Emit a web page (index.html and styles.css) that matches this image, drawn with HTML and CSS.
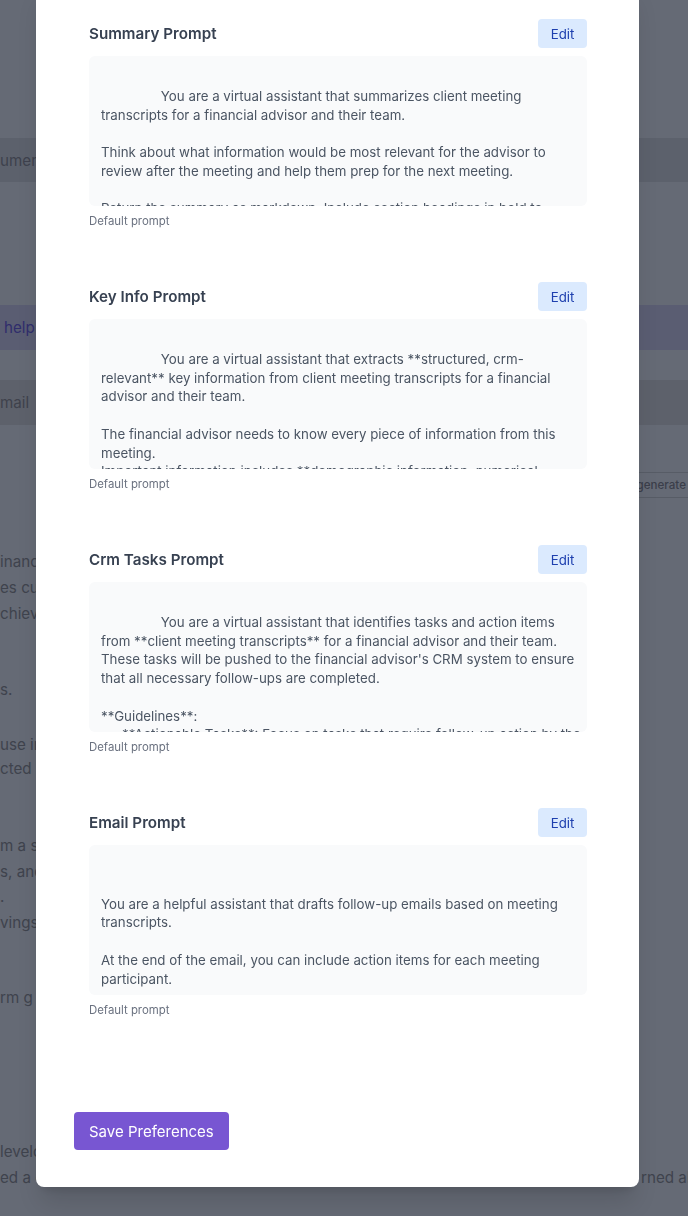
FILE: index.html
```html
<!DOCTYPE html>
<html lang="en">
<head>
<meta charset="utf-8">
<title>Preferences</title>
<link rel="stylesheet" href="styles.css">
</head>
<body>
<div class="page">
  <div class="band band-doc"><span class="band-label">umer</span></div>
  <div class="band band-help"><span class="band-label help-label">help</span></div>
  <div class="band band-mail"><span class="band-label mail-label">mail</span></div>
  <div class="regen-row"><span class="regen">Regenerate</span></div>
  <div class="para p1">
    <div class="frag">inanc</div>
    <div class="frag">es cu</div>
    <div class="frag">chieve</div>
  </div>
  <div class="para p2"><div class="frag">s.</div></div>
  <div class="para p3">
    <div class="frag">use in</div>
    <div class="frag">cted</div>
  </div>
  <div class="para p4">
    <div class="frag">m a si</div>
    <div class="frag">s, and</div>
    <div class="frag">.</div>
    <div class="frag">vings</div>
  </div>
  <div class="para p5"><div class="frag">rm g</div></div>
  <div class="para p6">
    <div class="frag">levelo</div>
    <div class="split"><span class="frag">ed a c</span><span class="tail">rned ab</span></div>
  </div>
</div>

<div class="overlay">
  <div class="modal">
    <div class="prompts">
      <section class="prompt">
        <div class="prompt-head">
          <h3 class="prompt-title">Summary Prompt</h3>
          <button class="edit-btn">Edit</button>
        </div>
        <div class="prompt-text">
                You are a virtual assistant that summarizes client meeting
transcripts for a financial advisor and their team.

Think about what information would be most relevant for the advisor to
review after the meeting and help them prep for the next meeting.

Return the summary as markdown. Include section headings in bold to</div>
        <p class="prompt-note">Default prompt</p>
      </section>

      <section class="prompt">
        <div class="prompt-head">
          <h3 class="prompt-title">Key Info Prompt</h3>
          <button class="edit-btn">Edit</button>
        </div>
        <div class="prompt-text">
                You are a virtual assistant that extracts **structured, crm-
relevant** key information from client meeting transcripts for a financial
advisor and their team.

The financial advisor needs to know every piece of information from this
meeting.
Important information includes **demographic information, numerical</div>
        <p class="prompt-note">Default prompt</p>
      </section>

      <section class="prompt">
        <div class="prompt-head">
          <h3 class="prompt-title">Crm Tasks Prompt</h3>
          <button class="edit-btn">Edit</button>
        </div>
        <div class="prompt-text">
                You are a virtual assistant that identifies tasks and action items
from **client meeting transcripts** for a financial advisor and their team.
These tasks will be pushed to the financial advisor's CRM system to ensure
that all necessary follow-ups are completed.

**Guidelines**:
   - **Actionable Tasks**: Focus on tasks that require follow-up action by the</div>
        <p class="prompt-note">Default prompt</p>
      </section>

      <section class="prompt">
        <div class="prompt-head">
          <h3 class="prompt-title">Email Prompt</h3>
          <button class="edit-btn">Edit</button>
        </div>
        <div class="prompt-text">

You are a helpful assistant that drafts follow-up emails based on meeting
transcripts.

At the end of the email, you can include action items for each meeting
participant.</div>
        <p class="prompt-note">Default prompt</p>
      </section>
    </div>
    <button class="save-btn">Save Preferences</button>
  </div>
</div>
</body>
</html>
```

FILE: styles.css
```css
* { box-sizing: border-box; }

html, body {
  margin: 0;
  padding: 0;
  height: 100%;
  overflow: hidden;
}

body {
  font-family: Inter, "Noto Sans", "Liberation Sans", sans-serif;
  background: #656a75;
  color: #3d414c;
}

/* underlying page (dimmed behind the dialog) */
.page {
  display: flex;
  flex-direction: column;
  font-size: 15.2px;
}

.band {
  display: flex;
  align-items: center;
  white-space: nowrap;
}

.band-doc {
  margin-top: 138px;
  height: 44px;
  background: #5c616c;
}

.band-help {
  margin-top: 123px;
  height: 45px;
  background: #5a5d72;
}

.band-mail {
  margin-top: 30px;
  height: 45px;
  background: #5d616b;
}

.band-label { color: #3e414d; }
.help-label { color: #302d6c; padding-left: 4px; }
.mail-label { color: #3f424c; }

.regen-row {
  margin-top: 47px;
  display: flex;
  justify-content: flex-end;
}

.regen {
  height: 26px;
  display: flex;
  align-items: center;
  border: 1px solid #575c66;
  border-right: none;
  padding: 0 3px 0 12px;
  margin-right: -1px;
  font-size: 11.6px;
  font-weight: 500;
  color: #3b3e4a;
  white-space: nowrap;
}

.para {
  line-height: 26px;
  white-space: nowrap;
  color: #3f434d;
}

.frag {
  display: block;
  width: 36px;
  overflow: hidden;
}

.p1 { margin-top: 51px; }
.p2 { margin-top: 50px; }
.p3 { margin-top: 30px; line-height: 24px; }
.p4 { margin-top: 52px; line-height: 25.5px; }
.p5 { margin-top: 50px; }
.p6 { margin-top: 128px; }

.split {
  display: flex;
  justify-content: space-between;
}

.tail {
  width: 47px;
}

/* dialog */
.overlay {
  position: fixed;
  inset: 0;
  display: flex;
  flex-direction: column;
  justify-content: flex-end;
  align-items: flex-start;
  padding: 0 0 29px 36px;
  overflow: hidden;
}

.modal {
  flex-shrink: 0;
  width: 603px;
  background: #ffffff;
  border-radius: 8px;
  padding: 40px 38px 37px;
  box-shadow: 0 20px 25px -5px rgba(0, 0, 0, 0.12), 0 8px 10px -6px rgba(0, 0, 0, 0.12);
  display: flex;
  flex-direction: column;
  align-items: flex-start;
}

.prompts {
  align-self: stretch;
  display: flex;
  flex-direction: column;
  gap: 53px;
  padding: 0 14px 0 15px;
}

.prompt {
  display: flex;
  flex-direction: column;
}

.prompt-head {
  display: flex;
  justify-content: space-between;
  align-items: center;
  height: 29px;
}

.prompt-title {
  margin: 0;
  font-size: 15.2px;
  font-weight: 600;
  color: #374151;
}

.edit-btn {
  height: 29px;
  width: 49px;
  padding: 0;
  border: none;
  border-radius: 4px;
  background: #dbeafe;
  color: #1e40af;
  font-family: inherit;
  font-size: 13.3px;
}

.prompt-text {
  margin-top: 8px;
  height: 150px;
  padding: 12px;
  background: #f9fafb;
  border-radius: 6px;
  overflow: hidden;
  white-space: pre;
  font-size: 13.3px;
  line-height: 18.75px;
  color: #4b5563;
}

.prompt-note {
  margin: 7px 0 0;
  font-size: 11.4px;
  line-height: 16px;
  color: #6b7280;
}

.save-btn {
  margin-top: 94px;
  height: 38px;
  padding: 0 15px;
  border: none;
  border-radius: 4px;
  background: #7856d2;
  color: #ffffff;
  font-family: inherit;
  font-size: 15px;
}
```
